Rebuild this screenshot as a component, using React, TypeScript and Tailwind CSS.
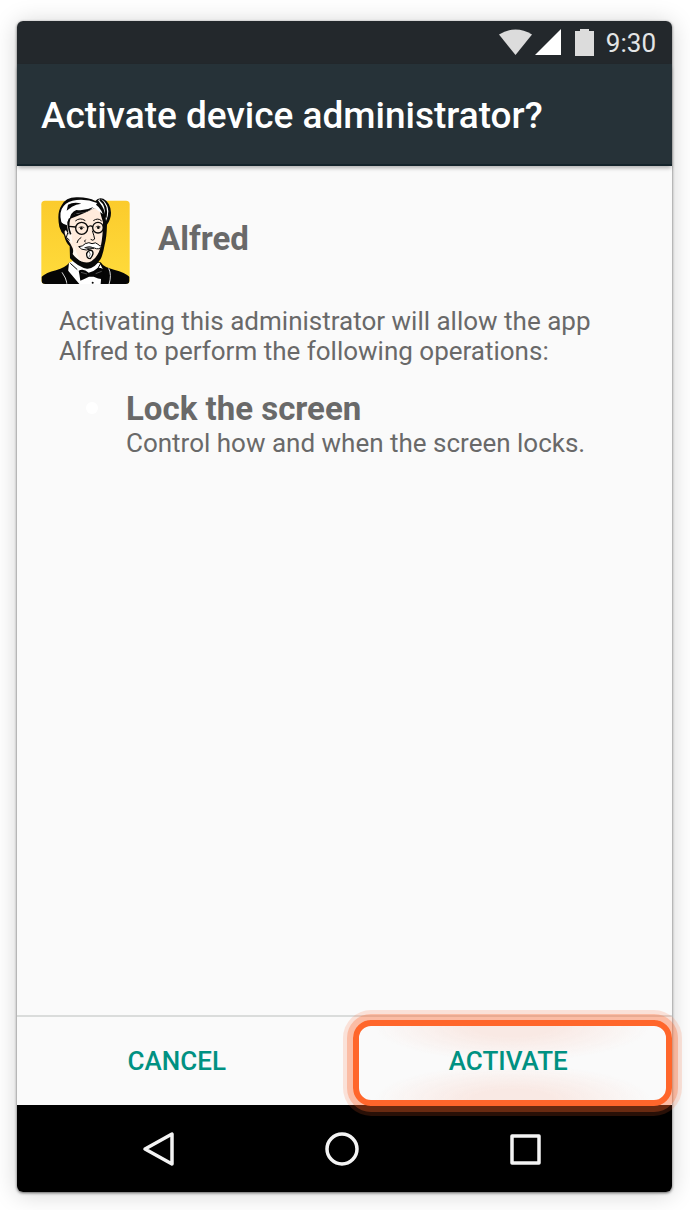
import type { ReactNode } from 'react';

type Operation = {
    title: string;
    description: string;
};

const operations: Operation[] = [
    {
        title: 'Lock the screen',
        description: 'Control how and when the screen locks.',
    },
];

function StatusBar() {
    return (
        <div className="flex h-[43px] items-center justify-end rounded-t-md bg-[#23282c] pr-4">
            <svg viewBox="0 0 96 28" className="mr-3 h-7 w-24" aria-hidden="true">
                {/* wifi */}
                <path d="M1 5.500Q17.500-4.500 34 5.500L17.500 26Z" fill="#dcdcdc" />
                {/* signal */}
                <path d="M63 0V26H37Z" fill="#fff" />
                {/* battery */}
                <path d="M82 0h9v2h5v25H77V2h5Z" fill="#dcdcdc" />
            </svg>
            <span className="text-[26px] leading-8 text-[#e3e5e6]">9:30</span>
        </div>
    );
}

function AlfredIcon() {
    return (
        <svg viewBox="33 33 267 267" className="size-[89px]" role="img" aria-label="Alfred">
            <defs>
                <linearGradient id="sun" x1="0" y1="0" x2="0" y2="1">
                    <stop offset="0" stopColor="#fbcb2c" />
                    <stop offset="1" stopColor="#ffdc3c" />
                </linearGradient>
                <clipPath id="tile">
                    <path d="M34 33H299V286Q299 297 287 297H46Q34 297 34 286Z" />
                </clipPath>
            </defs>
            <rect x="34" y="47" width="265" height="250" rx="11" fill="url(#sun)" />
            <g clipPath="url(#tile)">
                {/* jacket and shirt */}
                <path d="M34 297V276Q48 263 78 256Q106 248 120 231L212 232Q222 248 252 254Q286 262 299 276V297Z" fill="#050505" />
                <path d="M117 233L134 226L209 234L217 250L221 297H133L114 262Z" fill="#fff" />
                <path d="M96 262Q108 278 112 298M236 250Q246 270 237 298" fill="none" stroke="#d8d8d8" strokeWidth="3" />
                <path d="M112 254L148 297H112ZM216 250L232 297H212Z" fill="#050505" />
                <path d="M121 235L142 254M211 237L202 253" stroke="#050505" strokeWidth="3" />
                {/* bow tie */}
                <path d="M146 257Q161 250 176 263Q190 261 203 249Q214 247 219 253Q223 268 218 283Q204 282 191 275H177Q163 282 151 287Q149 270 146 257Z" fill="#050505" />
                <path d="M153 262L171 267M215 259L197 266" stroke="#777" strokeWidth="2" />
                <circle cx="188" cy="293" r="3" fill="#050505" />
            </g>
            {/* head */}
            <path d="M88 125Q80 83 94 62Q107 37 139 37Q174 36 196 48Q205 36 220 41Q242 53 243 83Q243 102 231 119Q230 158 224 179Q219 208 212 222Q192 253 171 251Q146 248 120 220L119 184Q107 173 102 150Q93 142 88 125Z" fill="#080808" />
            <path d="M111 126Q101 133 105 148Q108 161 116 168Q123 178 128 190Q131 212 148 226Q168 238 184 229Q204 216 212 186Q219 154 219 112L209 77L194 69Q164 85 121 101Z" fill="#ffebdc" />
            <path d="M108 130Q103 149 119 167L127 176L124 130ZM134 181Q138 213 157 230Q138 222 128 207Z" fill="#fff7ef" />
            {/* hair */}
            <path d="M94 111Q86 80 101 63Q113 48 140 45Q173 42 201 54Q217 67 220 88Q207 80 193 69Q168 84 137 86Q121 90 112 111L113 128Q102 123 94 111Z" fill="#fff" />
            <path d="M204 46Q211 39 222 48Q234 61 235 79Q235 94 228 108Q226 78 216 63Z" fill="#fff" />
            <path d="M114 59Q132 50 154 56Q138 57 126 65L110 77ZM139 75Q165 79 190 66Q175 84 145 84Q128 88 119 104Q121 82 139 75ZM202 53Q224 69 222 102Q217 72 198 59ZM96 115L111 121L116 149L108 136L99 139L91 130Z" fill="#080808" />
            <path d="M210 44Q233 61 227 98" fill="none" stroke="#080808" strokeWidth="6" />
            <path d="M119 101Q111 121 122 148" fill="none" stroke="#080808" strokeWidth="5" />
            {/* brows */}
            <path d="M136 108Q150 96 166 107M190 107Q204 97 215 108" fill="none" stroke="#080808" strokeWidth="3" />
            {/* glasses */}
            <g fill="none" stroke="#080808" strokeWidth="4">
                <circle cx="155" cy="130" r="18" />
                <circle cx="204" cy="128" r="16" />
                <path d="M173 127Q181 119 188 126M117 124L137 126" />
            </g>
            <path d="M146 128Q154 121 163 128M197 126Q204 120 212 126" fill="none" stroke="#080808" strokeWidth="2" />
            <circle cx="154" cy="130" r="4" fill="#080808" />
            <circle cx="205" cy="128" r="4" fill="#080808" />
            {/* nose and cheeks */}
            <path d="M187 137Q192 152 194 162Q189 169 182 163M167 164Q161 168 166 172M154 157Q142 164 141 174M113 144L109 157L119 166" fill="none" stroke="#080808" strokeWidth="3" />
            {/* moustache */}
            <path d="M146 185Q158 185 166 176Q177 170 186 176Q198 170 204 178Q209 184 216 184Q207 196 193 189Q181 192 169 195Q153 195 146 185Z" fill="#fff" stroke="#080808" strokeWidth="3" />
            <path d="M164 188Q179 181 192 189Q181 195 164 188Z" fill="#777" stroke="#080808" strokeWidth="2" />
            {/* goatee */}
            <path d="M170 205Q176 193 186 197Q194 205 181 221Q169 221 170 205Z" fill="#fff" stroke="#080808" strokeWidth="4" />
            <path d="M178 201Q184 207 177 216" fill="none" stroke="#777" strokeWidth="3" />
        </svg>
    );
}

function NavButton({ label, children }: { label: string; children: ReactNode }) {
    return (
        <button type="button" aria-label={label} className="flex size-12 items-center justify-center">
            <svg viewBox="0 0 36 36" className="size-9" fill="none" stroke="#f4f4f4" strokeWidth="3.500" strokeLinejoin="round">
                {children}
            </svg>
        </button>
    );
}

export default function App() {
    return (
        <div className="flex min-h-screen flex-col bg-white pt-[21px] pr-[18px] pb-[18px] pl-[17px] font-[Roboto,sans-serif]">
            <div className="flex flex-1 flex-col rounded-md bg-[#fafafa] shadow-[0_1px_3px_rgba(0,0,0,0.6),0_2px_24px_rgba(0,0,0,0.18)]">
                <StatusBar />
                <header className="flex h-[102px] items-center border-b-2 border-[#15242b] bg-[#263238] px-6 pt-1 shadow-[0_3px_4px_-1px_rgba(0,0,0,0.3)]">
                    <h1 className="text-[37px] leading-10 font-medium text-white">Activate device administrator?</h1>
                </header>

                <main className="flex-1 px-6 pt-[30px] text-[#696969]">
                    <div className="flex items-center gap-7">
                        <AlfredIcon />
                        <h2 className="pb-1 text-[33px] leading-[38px] font-bold">Alfred</h2>
                    </div>
                    <div className="px-[18px] pt-[21px]">
                        <p className="text-[26px] leading-[30px]">
                            Activating this administrator will allow the app Alfred to perform the following operations:
                        </p>
                        <ul className="pt-6 pl-[27px]">
                            {operations.map((operation) => (
                                <li key={operation.title} className="flex gap-7">
                                    <span className="mt-3 size-3 shrink-0 rounded-full bg-white" />
                                    <div>
                                        <h3 className="text-[33px] leading-[38px] font-bold">{operation.title}</h3>
                                        <p className="text-[26px] leading-[30px]">{operation.description}</p>
                                    </div>
                                </li>
                            ))}
                        </ul>
                    </div>
                </main>

                <footer className="grid h-[90px] grid-cols-2 border-t-2 border-[#dadcdb] pt-px text-[26px] font-medium text-[#009182]">
                    <button type="button" className="pr-2">CANCEL</button>
                    <button type="button" className="relative">
                        {/* highlight ring, spills over the navigation bar */}
                        <span className="absolute top-0.5 right-0 -bottom-px left-2 rounded-[18px] border-6 border-[#ff662b] bg-[radial-gradient(ellipse_45%_48%_at_50%_0%,#f9e9e4_30%,#fafafa00_100%),radial-gradient(ellipse_45%_48%_at_50%_100%,#f9e9e4_30%,#fafafa00_100%)] shadow-[0_0_0_6px_rgba(255,102,43,0.3),0_0_0_10px_rgba(255,102,43,0.16)]" />
                        <span className="relative">ACTIVATE</span>
                    </button>
                </footer>

                <nav className="flex h-[87px] items-center justify-center gap-[135px] rounded-b-md bg-black pr-1.5">
                    <NavButton label="Back">
                        <path d="M31 3V33L4 18Z" />
                    </NavButton>
                    <NavButton label="Home">
                        <circle cx="18" cy="18" r="15" />
                    </NavButton>
                    <NavButton label="Recent apps">
                        <rect x="5" y="5" width="27" height="27" />
                    </NavButton>
                </nav>
            </div>
        </div>
    );
}
